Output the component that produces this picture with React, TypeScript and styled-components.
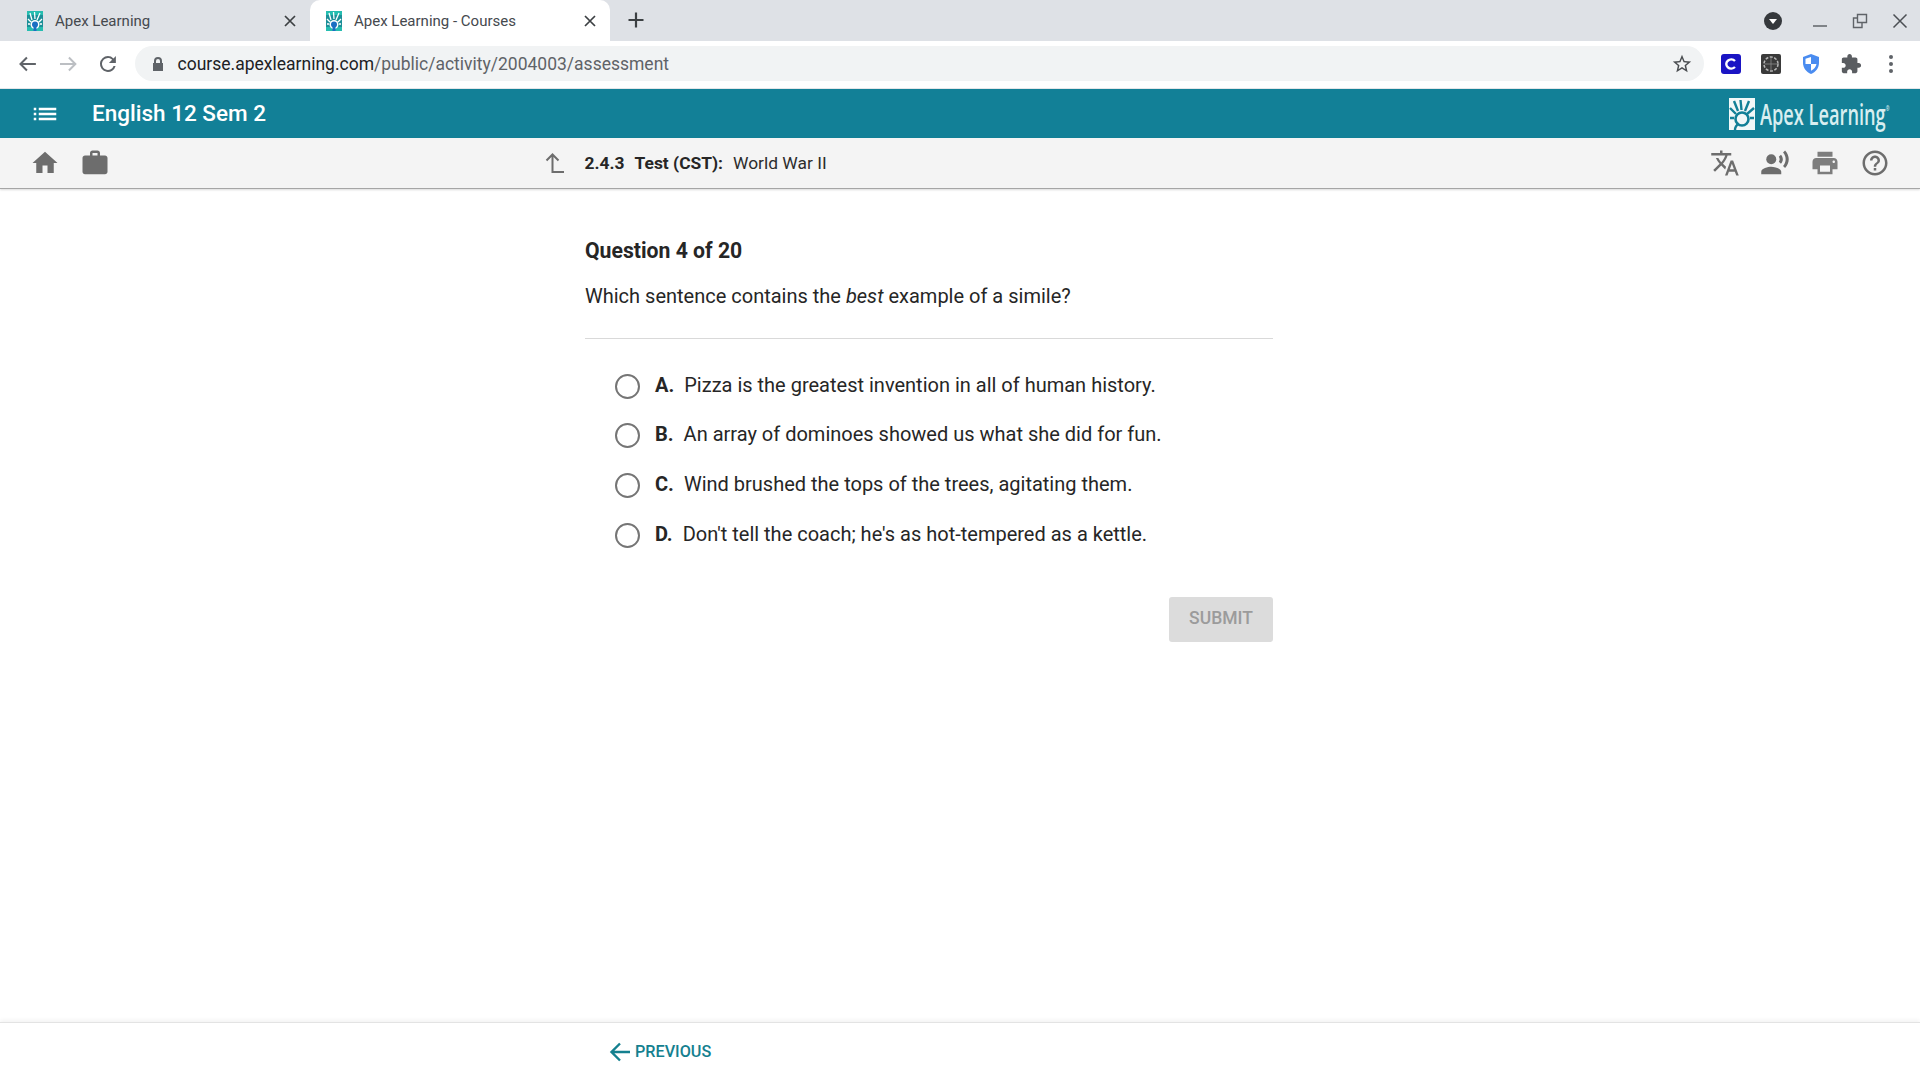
import React from 'react';
import styled, { createGlobalStyle } from 'styled-components';

const GlobalStyle = createGlobalStyle`
  * { box-sizing: border-box; }
  html, body { margin: 0; padding: 0; background: #fff; }
  body { font-family: Roboto, "Liberation Sans", sans-serif; color: #262626; }
`;

const Page = styled.div`
  width: 1920px;
  height: 1080px;
  display: flex;
  flex-direction: column;
  overflow: hidden;
`;

/* browser chrome */
const TabStrip = styled.div`
  height: 41px;
  background: #dee1e6;
  display: flex;
  align-items: stretch;
  flex-shrink: 0;
`;

const Tab = styled.div<{ $active?: boolean }>`
  width: ${(p) => (p.$active ? '300px' : '310px')};
  padding: 0 12px 0 ${(p) => (p.$active ? '16px' : '27px')};
  display: flex;
  align-items: center;
  background: ${(p) => (p.$active ? '#fff' : 'transparent')};
  border-radius: ${(p) => (p.$active ? '10px 10px 0 0' : '0')};
`;

const TabTitle = styled.span`
  flex: 1;
  margin-left: 12px;
  font-size: 15px;
  color: #45494e;
  white-space: nowrap;
`;

const TabClose = styled.svg`
  width: 14px;
  height: 14px;
  margin-right: 1px;
`;

const NewTab = styled.svg`
  width: 20px;
  height: 20px;
  margin: 10px 0 0 16px;
`;

const WindowControls = styled.div`
  margin-left: auto;
  display: flex;
  align-items: center;
  padding-right: 12px;
`;

const ProfileDot = styled.svg`
  width: 20px;
  height: 20px;
  margin-right: 5px;
`;

const WindowButton = styled.svg`
  width: 16px;
  height: 16px;
  margin-left: 24px;
`;

const Toolbar = styled.div`
  height: 48px;
  background: #fff;
  border-bottom: 1px solid #e4e6e9;
  display: flex;
  align-items: center;
  padding: 0 0 2px 16px;
  flex-shrink: 0;
`;

const NavIcon = styled.svg`
  width: 24px;
  height: 24px;
  margin-right: 16px;
`;

const Omnibox = styled.div`
  width: 1580px;
  height: 35px;
  margin-left: -1px;
  border-radius: 18px;
  background: #f1f3f4;
  display: flex;
  align-items: center;
  padding: 0 11px 0 16px;
`;

const Url = styled.span`
  flex: 1;
  margin-left: 13px;
  font-size: 17.5px;
  color: #5f6368;
  white-space: nowrap;
`;

const UrlHost = styled.span`
  color: #202124;
`;

const Extensions = styled.div`
  display: flex;
  align-items: center;
  margin-left: 16px;
`;

const ExtensionIcon = styled.svg`
  width: 22px;
  height: 22px;
  margin-right: 18px;
`;

/* app header */
const AppBar = styled.header`
  height: 49px;
  background: #128097;
  display: flex;
  align-items: center;
  padding: 0 28px 0 30px;
  flex-shrink: 0;
`;

const MenuIcon = styled.svg`
  width: 30px;
  height: 30px;
  margin-right: 32px;
`;

const CourseTitle = styled.h1`
  margin: 0 0 2px;
  flex: 1;
  font-size: 22.5px;
  font-weight: 500;
  color: #fff;
`;

const Logo = styled.div`
  display: flex;
  align-items: center;
  gap: 5px;
`;

const LogoMark = styled.svg`
  width: 26px;
  height: 32px;
`;

const LogoText = styled.span`
  display: inline-block;
  width: 132px;
  font-family: "Open Sans", sans-serif;
  font-size: 28px;
  font-weight: 600;
  color: #d8eef0;
  white-space: nowrap;
  transform: scaleX(0.65);
  transform-origin: left center;
`;

const LogoMarkSmall = styled.sup`
  font-size: 7px;
  vertical-align: 14px;
  line-height: 0;
`;

const SubBar = styled.div`
  height: 51px;
  background: #f4f4f4;
  border-bottom: 1px solid #a5a5a5;
  box-shadow: 0 1px 2px rgba(0, 0, 0, 0.15);
  display: flex;
  align-items: center;
  padding: 0 20px;
  flex-shrink: 0;
`;

const IconGroup = styled.div`
  display: flex;
`;

const BarIcon = styled.svg<{ $light?: boolean }>`
  width: 50px;
  height: 30px;
  color: ${(p) => (p.$light ? '#7d7d7d' : '#6d6d6d')};
`;

const Breadcrumb = styled.div`
  flex: 1;
  display: flex;
  align-items: center;
  font-size: 17.4px;
  padding-left: 422px;
`;

const UpIcon = styled.svg`
  width: 24px;
  height: 24px;
  margin-right: 18.5px;
`;

const CrumbStrong = styled.strong`
  font-weight: 700;
  margin-right: 10px;
`;

const CrumbName = styled.span`
  color: #2c2c2c;
`;

/* question */
const Main = styled.main`
  flex: 1;
  width: 688px;
  margin-left: 585px;
`;

const Heading = styled.h2`
  margin: 47px 0 0;
  font-size: 21.2px;
  line-height: 30px;
  font-weight: 700;
`;

const Prompt = styled.p`
  margin: 15px 0 0;
  padding-bottom: 27px;
  font-size: 20px;
  line-height: 30px;
  border-bottom: 1px solid #d9d9d9;
`;

const Options = styled.ul`
  list-style: none;
  margin: 30.5px 0 0;
  padding: 0 0 0 30px;
  display: flex;
  flex-direction: column;
  gap: 19.7px;
`;

const Option = styled.li`
  height: 30px;
  display: flex;
  align-items: center;
  font-size: 20px;
`;

const Radio = styled.span`
  width: 25px;
  height: 25px;
  margin: 3px 15px 0 0;
  border: 2px solid #757575;
  border-radius: 50%;
  background: #fff;
`;

const OptionLetter = styled.b`
  font-weight: 700;
  margin-right: 10px;
`;

const Actions = styled.div`
  display: flex;
  justify-content: flex-end;
  margin-top: 48px;
`;

const SubmitButton = styled.button`
  width: 104px;
  height: 45px;
  border: 0;
  border-radius: 3px;
  padding: 0 0 2px;
  background: #dcdcdc;
  color: #9b9b9b;
  font-family: Roboto, sans-serif;
  font-size: 17.5px;
  font-weight: 500;
`;

const Footer = styled.footer`
  height: 58px;
  border-top: 1px solid #e3e3e3;
  box-shadow: 0 -2px 4px rgba(0, 0, 0, 0.05);
  background: #fff;
  display: flex;
  align-items: center;
  padding-left: 608px;
  flex-shrink: 0;
`;

const PreviousLink = styled.a`
  display: flex;
  align-items: center;
  gap: 3px;
  font-size: 16.2px;
  font-weight: 500;
  color: #14808f;
`;

const answers = [
  ['A.', 'Pizza is the greatest invention in all of human history.'],
  ['B.', 'An array of dominoes showed us what she did for fun.'],
  ['C.', 'Wind brushed the tops of the trees, agitating them.'],
  ['D.', "Don't tell the coach; he's as hot-tempered as a kettle."],
];

const Favicon = () => (
  <svg width="16" height="20" viewBox="0 0 16 20" style={{ flexShrink: 0 }}>
    <rect width="16" height="20" fill="#26bdb0" />
    <rect y="4" width="16" height="12" fill="#1c8f98" />
    <path d="M3 2l2 7M7.5 1l.5 7M13 2l-3 7M1 8l3 3M15 8l-3 3M1 13h2M15 13h-2" stroke="#fff" strokeWidth="1.3" />
    <circle cx="8" cy="13.5" r="4.5" fill="#fff" />
    <circle cx="8" cy="13.5" r="3" fill="#1b6fc2" />
    <path d="M6.5 20v-4h3v4z" fill="#1b6fc2" />
  </svg>
);

const CloseX = () => (
  <TabClose viewBox="0 0 14 14">
    <path d="M2 2l10 10M12 2L2 12" stroke="#3c4043" strokeWidth="1.7" />
  </TabClose>
);

const App = () => {
  return (
    <Page>
      <GlobalStyle />
      <TabStrip>
        <Tab>
          <Favicon />
          <TabTitle>Apex Learning</TabTitle>
          <CloseX />
        </Tab>
        <Tab $active>
          <Favicon />
          <TabTitle>Apex Learning - Courses</TabTitle>
          <CloseX />
        </Tab>
        <NewTab viewBox="0 0 20 20">
          <path d="M10 2.5v15M2.5 10h15" stroke="#3c4043" strokeWidth="2.2" />
        </NewTab>
        <WindowControls>
          <ProfileDot viewBox="0 0 20 20">
            <circle cx="10" cy="10" r="9" fill="#35383c" />
            <path d="M6 8h8l-4 5z" fill="#fff" />
          </ProfileDot>
          <WindowButton viewBox="0 0 16 16">
            <path d="M1 13h14" stroke="#5f6368" strokeWidth="1.5" />
          </WindowButton>
          <WindowButton viewBox="0 0 16 16">
            <path d="M5.5 1.5h9v8h-9zM5.5 5H1.5v9.5h8.5v-5" fill="none" stroke="#5f6368" strokeWidth="1.4" />
          </WindowButton>
          <WindowButton viewBox="0 0 16 16">
            <path d="M1.5 1.5l13 13M14.5 1.5l-13 13" stroke="#4b4f54" strokeWidth="1.5" />
          </WindowButton>
        </WindowControls>
      </TabStrip>

      <Toolbar>
        <NavIcon viewBox="0 0 24 24">
          <path d="M20 12H5M11 5.5L4.5 12l6.5 6.5" fill="none" stroke="#5f6368" strokeWidth="2" />
        </NavIcon>
        <NavIcon viewBox="0 0 24 24">
          <path d="M4 12h15M13 5.5l6.5 6.5-6.500 6.500" fill="none" stroke="#bcbfc3" strokeWidth="2" />
        </NavIcon>
        <NavIcon viewBox="0 0 24 24">
          <path d="M17.65 6.35A7.96 7.96 0 0 0 12 4a8 8 0 1 0 7.73 10h-2.08A6 6 0 1 1 12 6c1.66 0 3.14.69 4.22 1.78L13 11h7V4z" fill="#5f6368" />
        </NavIcon>
        <Omnibox>
          <svg width="14" height="16" viewBox="0 0 14 16">
            <path d="M3 7V5a4 4 0 0 1 8 0v2h1v8H2V7zm2 0h4V5a2 2 0 0 0-4 0z" fill="#5f6368" />
          </svg>
          <Url>
            <UrlHost>course.apexlearning.com</UrlHost>/public/activity/2004003/assessment
          </Url>
          <svg width="22" height="22" viewBox="0 0 24 24">
            <path d="M22 9.24l-7.19-.62L12 2 9.19 8.63 2 9.24l5.46 4.73L5.82 21 12 17.27 18.18 21l-1.63-7.03L22 9.24zM12 15.4l-3.76 2.27 1-4.28-3.32-2.88 4.38-.38L12 6.1l1.71 4.04 4.38.38-3.32 2.88 1 4.28L12 15.4z" fill="#4a4d51" />
          </svg>
        </Omnibox>
        <Extensions>
          <ExtensionIcon viewBox="0 0 22 22">
            <rect x="1" y="1" width="20" height="20" rx="3" fill="#1a14c4" />
            <path d="M15 8a5 4.5 0 1 0 0 6" fill="none" stroke="#fff" strokeWidth="2.4" />
          </ExtensionIcon>
          <ExtensionIcon viewBox="0 0 22 22">
            <rect x="1" y="1" width="20" height="20" rx="2" fill="#3a3a3a" />
            <circle cx="11" cy="11" r="7" fill="none" stroke="#b5b5b5" strokeWidth="1.5" strokeDasharray="3 1.5" />
            <path d="M5 11h12M11 5v12" stroke="#8a8a8a" strokeWidth="0.8" />
          </ExtensionIcon>
          <ExtensionIcon viewBox="0 0 22 22">
            <path d="M11 1l8 3v6c0 5-3.5 9-8 11-4.5-2-8-6-8-11V4z" fill="#4a8cf0" />
            <path d="M11 4v7H5.5V5.8zM11 11h5.5c-.5 3-2.6 5.3-5.5 6.8z" fill="#fff" />
          </ExtensionIcon>
          <ExtensionIcon viewBox="0 0 24 24">
            <path d="M20.5 11H19V7c0-1.1-.9-2-2-2h-4V3.5C13 2.12 11.88 1 10.5 1S8 2.12 8 3.5V5H4c-1.1 0-1.99.9-1.99 2v3.8H3.5c1.49 0 2.7 1.21 2.7 2.7s-1.21 2.7-2.7 2.7H2V20c0 1.1.9 2 2 2h3.8v-1.5c0-1.49 1.21-2.7 2.7-2.7 1.49 0 2.7 1.21 2.7 2.7V22H17c1.1 0 2-.9 2-2v-4h1.5c1.38 0 2.5-1.12 2.5-2.5S21.88 11 20.5 11z" fill="#5a5d61" />
          </ExtensionIcon>
          <ExtensionIcon viewBox="0 0 22 22">
            <circle cx="11" cy="4" r="2" fill="#5f6368" />
            <circle cx="11" cy="11" r="2" fill="#5f6368" />
            <circle cx="11" cy="18" r="2" fill="#5f6368" />
          </ExtensionIcon>
        </Extensions>
      </Toolbar>

      <AppBar>
        <MenuIcon viewBox="0 0 24 24">
          <path d="M3 13h2v-2H3v2zm0 4h2v-2H3v2zm0-8h2V7H3v2zm4 4h14v-2H7v2zm0 4h14v-2H7v2zM7 7v2h14V7H7z" fill="#fff" />
        </MenuIcon>
        <CourseTitle>English 12 Sem 2</CourseTitle>
        <Logo>
          <LogoMark viewBox="0 0 26 32">
            <rect width="26" height="32" fill="#f2f8f8" />
            <path d="M5 3l4 10M11.5 2l1 10M20 3l-4 10M1 10l6 6M25 10l-7 6M1 20h4M25 20h-4" stroke="#128097" strokeWidth="2.4" />
            <circle cx="13" cy="21" r="6.5" fill="none" stroke="#128097" strokeWidth="2.6" />
            <path d="M6 32c0-3 1.5-5 4-6.5" fill="none" stroke="#128097" strokeWidth="2.4" />
          </LogoMark>
          <LogoText>
            Apex Learning<LogoMarkSmall>®</LogoMarkSmall>
          </LogoText>
        </Logo>
      </AppBar>

      <SubBar>
        <IconGroup>
          <BarIcon viewBox="0 0 24 24">
            <path d="M10 20v-6h4v6h5v-8h3L12 3 2 12h3v8z" fill="currentColor" />
          </BarIcon>
          <BarIcon viewBox="0 0 24 24">
            <path d="M20 6h-4V4c0-1.11-.89-2-2-2h-4c-1.11 0-2 .89-2 2v2H4c-1.11 0-1.99.89-1.99 2L2 19c0 1.11.89 2 2 2h16c1.11 0 2-.89 2-2V8c0-1.11-.89-2-2-2zm-6 0h-4V4h4v2z" fill="currentColor" />
          </BarIcon>
        </IconGroup>
        <Breadcrumb>
          <UpIcon viewBox="0 0 24 24">
            <path d="M22 21H10.5V4M4.5 9.5l6-6 6 6" fill="none" stroke="#6d6d6d" strokeWidth="2" />
          </UpIcon>
          <CrumbStrong>2.4.3</CrumbStrong>
          <CrumbStrong>Test (CST):</CrumbStrong>
          <CrumbName>World War II</CrumbName>
        </Breadcrumb>
        <IconGroup>
          <BarIcon viewBox="0 0 24 24">
            <path d="M12.87 15.07l-2.54-2.51.03-.03c1.74-1.94 2.98-4.17 3.71-6.53H17V4h-7V2H8v2H1v1.99h11.17C11.5 7.92 10.44 9.75 9 11.35 8.07 10.32 7.3 9.19 6.69 8h-2c.73 1.63 1.73 3.17 2.98 4.56l-5.09 5.02L4 19l5-5 3.11 3.11.76-2.04zM18.5 10h-2L12 22h2l1.12-3h4.75L21 22h2l-4.5-12zm-2.62 7l1.62-4.33L19.12 17h-3.24z" fill="currentColor" />
          </BarIcon>
          <BarIcon viewBox="0 0 24 24">
            <circle cx="9" cy="9" r="4" fill="currentColor" />
            <path d="M9 15c-2.67 0-8 1.34-8 4v2h16v-2c0-2.66-5.33-4-8-4zm7.76-9.64l-1.68 1.69c.84 1.18.84 2.71 0 3.89l1.68 1.69c2.02-2.02 2.02-5.07 0-7.27zM20.07 2l-1.63 1.63c2.77 3.02 2.77 7.56 0 10.74L20.07 16c3.9-3.89 3.91-9.95 0-14z" fill="currentColor" />
          </BarIcon>
          <BarIcon $light viewBox="0 0 24 24">
            <path d="M19 8H5c-1.66 0-3 1.34-3 3v6h4v4h12v-4h4v-6c0-1.66-1.34-3-3-3zm-3 11H8v-5h8v5zm3-7c-.55 0-1-.45-1-1s.45-1 1-1 1 .45 1 1-.45 1-1 1zm-1-9H6v4h12V3z" fill="currentColor" />
          </BarIcon>
          <BarIcon viewBox="0 0 24 24">
            <path d="M11 18h2v-2h-2v2zm1-16C6.48 2 2 6.48 2 12s4.48 10 10 10 10-4.48 10-10S17.52 2 12 2zm0 18c-4.41 0-8-3.59-8-8s3.59-8 8-8 8 3.59 8 8-3.59 8-8 8zm0-14c-2.21 0-4 1.79-4 4h2c0-1.1.9-2 2-2s2 .9 2 2c0 2-3 1.75-3 5h2c0-2.25 3-2.5 3-5 0-2.21-1.79-4-4-4z" fill="currentColor" />
          </BarIcon>
        </IconGroup>
      </SubBar>

      <Main>
        <Heading>Question 4 of 20</Heading>
        <Prompt>
          Which sentence contains the <em>best</em> example of a simile?
        </Prompt>
        <Options>
          {answers.map(([letter, text]) => (
            <Option key={letter}>
              <Radio />
              <OptionLetter>{letter}</OptionLetter>
              {text}
            </Option>
          ))}
        </Options>
        <Actions>
          <SubmitButton disabled>SUBMIT</SubmitButton>
        </Actions>
      </Main>

      <Footer>
        <PreviousLink>
          <svg width="24" height="24" viewBox="0 0 24 24">
            <path d="M22 12H4M12 3.5L3.5 12l8.5 8.5" fill="none" stroke="#14808f" strokeWidth="2.4" />
          </svg>
          PREVIOUS
        </PreviousLink>
      </Footer>
    </Page>
  );
};

export default App;
